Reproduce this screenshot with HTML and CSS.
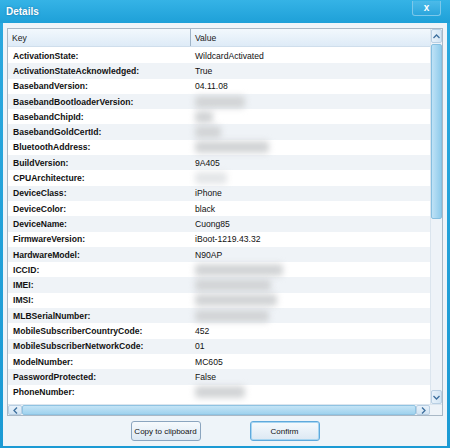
FILE: index.html
```html
<!DOCTYPE html>
<html>
<head>
<meta charset="utf-8">
<link rel="stylesheet" href="styles.css">
</head>
<body>
<div class="window">
  <div class="titlebar">
    <span class="title">Details</span>
    <div class="close"><span>x</span></div>
  </div>
  <div class="body">
    <div class="grid">
      <div class="main">
        <div class="table">
          <div class="header">
            <div class="hkey">Key</div>
            <div class="hval">Value</div>
          </div>
          <div class="rows">
            <div class="row"><div class="k">ActivationState:</div><div class="v">WildcardActivated</div></div>
            <div class="row alt"><div class="k">ActivationStateAcknowledged:</div><div class="v">True</div></div>
            <div class="row"><div class="k">BasebandVersion:</div><div class="v">04.11.08</div></div>
            <div class="row alt"><div class="k">BasebandBootloaderVersion:</div><div class="v"><span class="blur" style="width:50px"></span></div></div>
            <div class="row"><div class="k">BasebandChipId:</div><div class="v"><span class="blur" style="width:18px"></span></div></div>
            <div class="row alt"><div class="k">BasebandGoldCertId:</div><div class="v"><span class="blur" style="width:26px"></span></div></div>
            <div class="row"><div class="k">BluetoothAddress:</div><div class="v"><span class="blur" style="width:74px"></span></div></div>
            <div class="row alt"><div class="k">BuildVersion:</div><div class="v">9A405</div></div>
            <div class="row"><div class="k">CPUArchitecture:</div><div class="v"><span class="blur light" style="width:32px"></span></div></div>
            <div class="row alt"><div class="k">DeviceClass:</div><div class="v">iPhone</div></div>
            <div class="row"><div class="k">DeviceColor:</div><div class="v">black</div></div>
            <div class="row alt"><div class="k">DeviceName:</div><div class="v">Cuong85</div></div>
            <div class="row"><div class="k">FirmwareVersion:</div><div class="v">iBoot-1219.43.32</div></div>
            <div class="row alt"><div class="k">HardwareModel:</div><div class="v">N90AP</div></div>
            <div class="row"><div class="k">ICCID:</div><div class="v"><span class="blur" style="width:88px"></span></div></div>
            <div class="row alt"><div class="k">IMEI:</div><div class="v"><span class="blur" style="width:76px"></span></div></div>
            <div class="row"><div class="k">IMSI:</div><div class="v"><span class="blur" style="width:82px"></span></div></div>
            <div class="row alt"><div class="k">MLBSerialNumber:</div><div class="v"><span class="blur" style="width:74px"></span></div></div>
            <div class="row"><div class="k">MobileSubscriberCountryCode:</div><div class="v">452</div></div>
            <div class="row alt"><div class="k">MobileSubscriberNetworkCode:</div><div class="v">01</div></div>
            <div class="row"><div class="k">ModelNumber:</div><div class="v">MC605</div></div>
            <div class="row alt"><div class="k">PasswordProtected:</div><div class="v">False</div></div>
            <div class="row"><div class="k">PhoneNumber:</div><div class="v"><span class="blur" style="width:50px"></span></div></div>
          </div>
        </div>
        <div class="vscroll">
          <div class="sbtn"><svg width="7" height="5" viewBox="0 0 7 5"><path d="M0.5 4 L3.5 1 L6.5 4" fill="none" stroke="#3d6f9e" stroke-width="1.3"/></svg></div>
          <div class="vtrack"><div class="vthumb"></div></div>
          <div class="sbtn"><svg width="7" height="5" viewBox="0 0 7 5"><path d="M0.5 1 L3.5 4 L6.5 1" fill="none" stroke="#3d6f9e" stroke-width="1.3"/></svg></div>
        </div>
      </div>
      <div class="hscroll">
        <div class="hbtn"><svg width="5" height="7" viewBox="0 0 5 7"><path d="M4 0.5 L1 3.5 L4 6.5" fill="none" stroke="#3d6f9e" stroke-width="1.3"/></svg></div>
        <div class="hthumb"></div>
        <div class="hbtn"><svg width="5" height="7" viewBox="0 0 5 7"><path d="M1 0.5 L4 3.5 L1 6.5" fill="none" stroke="#3d6f9e" stroke-width="1.3"/></svg></div>
        <div class="corner"></div>
      </div>
    </div>
    <div class="buttons">
      <button class="btn">Copy to clipboard</button>
      <button class="btn default">Confirm</button>
    </div>
  </div>
</div>
</body>
</html>
```

FILE: styles.css
```css
* { box-sizing: border-box; }
html, body { margin: 0; padding: 0; }
body {
  width: 450px;
  height: 448px;
  overflow: hidden;
  font-family: "Liberation Sans", Arial, sans-serif;
  background: #ffffff;
}
.window {
  width: 450px;
  height: 448px;
  display: flex;
  flex-direction: column;
  background: linear-gradient(#2ba9df, #1b9ad4);
  padding: 0 3px 2px 3px;
}
.titlebar {
  height: 23px;
  flex: none;
  display: flex;
  align-items: flex-start;
  justify-content: space-between;
  background: linear-gradient(#35b3e6, #1ea0d8);
  margin: 0 -3px;
  padding: 0 9px 0 6px;
}
.title {
  color: #fff;
  font-weight: bold;
  font-size: 10px;
  line-height: 23px;
  text-shadow: 0 0 2px rgba(0,60,110,0.5);
}
.close {
  width: 29px;
  height: 15px;
  margin-top: 1px;
  border: 1px solid #7cc8ea;
  border-top: none;
  border-radius: 0 0 3px 3px;
  background: linear-gradient(#4cbbe9, #2ba5dc);
  display: flex;
  align-items: center;
  justify-content: center;
  color: #fff;
  font-weight: bold;
  font-size: 10px;
  line-height: 1;
}
.body {
  flex: 1;
  background: #eef4f9;
  display: flex;
  flex-direction: column;
  padding: 5px 4px 0 4px;
}
.grid {
  border: 1px solid #a9b8c6;
  background: #fff;
  height: 388px;
  flex: none;
  display: flex;
  flex-direction: column;
}
.main {
  flex: 1;
  display: flex;
  min-height: 0;
}
.table {
  flex: 1;
  display: flex;
  flex-direction: column;
  overflow: hidden;
}
.header {
  height: 18px;
  flex: none;
  display: flex;
  background: linear-gradient(#f2f8fd, #deebf7);
  border-bottom: 1px solid #cfdeec;
  font-size: 8.6px;
  color: #1a1a1a;
}
.hkey {
  width: 183px;
  padding-left: 4px;
  line-height: 18px;
  border-right: 1px solid #9fb4c8;
}
.hval {
  padding-left: 4px;
  line-height: 18px;
}
.rows {
  padding-top: 1px;
}
.row {
  height: 15.3px;
  display: flex;
  align-items: center;
  font-size: 8.6px;
  color: #111;
}
.row.alt { background: #eff3f7; }
.k {
  width: 183px;
  padding-left: 5px;
  font-weight: bold;
  white-space: nowrap;
}
.v {
  padding-left: 4px;
  white-space: nowrap;
  display: flex;
  align-items: center;
}
.blur {
  display: inline-block;
  height: 12px;
  background: #d2d4d6;
  filter: blur(3px);
  border-radius: 3px;
}
.blur.light { background: #e4e6e8; }
.vscroll {
  width: 12px;
  flex: none;
  display: flex;
  flex-direction: column;
  background: #eef3f8;
  border-left: 1px solid #dbe5ee;
}
.sbtn {
  height: 14px;
  flex: none;
  display: flex;
  align-items: center;
  justify-content: center;
  background: linear-gradient(to right, #e8f2fb, #d2e4f3);
  border: 1px solid #b9cfe3;
  border-radius: 2px;
}
.vtrack {
  flex: 1;
  padding: 1px 0;
}
.vthumb {
  height: 175px;
  background: linear-gradient(to right, #bfe2f6, #8fcbeb);
  border: 1px solid #86bfe0;
  border-radius: 2px;
}
.hscroll {
  height: 11px;
  flex: none;
  display: flex;
  background: #eef3f8;
  border-top: 1px solid #dbe5ee;
}
.hbtn {
  width: 14px;
  flex: none;
  display: flex;
  align-items: center;
  justify-content: center;
  background: linear-gradient(#e8f2fb, #d2e4f3);
  border: 1px solid #b9cfe3;
  border-radius: 2px;
}
.hthumb {
  flex: 1;
  background: linear-gradient(#c4e4f6, #9fd2ee);
  border: 1px solid #8fc3e2;
  border-radius: 2px;
}
.corner {
  width: 12px;
  flex: none;
  background: #eef3f8;
}
.buttons {
  flex: 1;
  display: flex;
  justify-content: center;
  align-items: center;
  gap: 49px;
}
.btn {
  width: 70px;
  height: 20px;
  font-family: "Liberation Sans", Arial, sans-serif;
  font-size: 8px;
  white-space: nowrap;
  color: #111;
  border: 1px solid #8ba5bf;
  border-radius: 3px;
  background: linear-gradient(#f6fafd, #dce8f3);
  padding: 0;
}
.btn.default {
  border: 1px solid #5fa9dc;
  box-shadow: inset 0 0 0 1px #a7d5f1;
}
```
